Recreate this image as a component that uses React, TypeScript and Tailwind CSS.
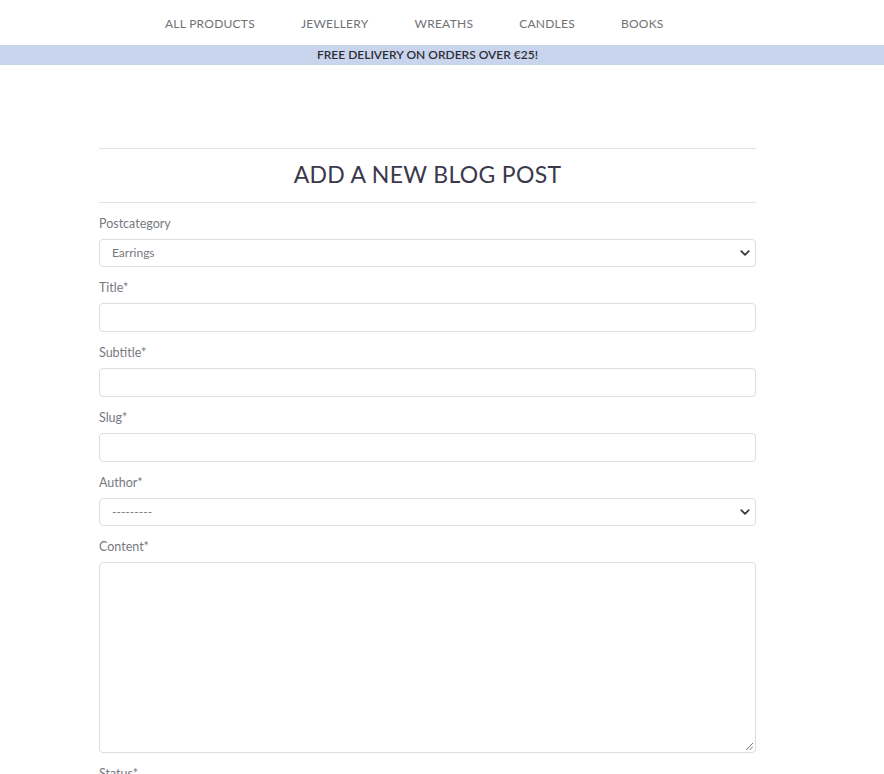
import React from "react";

const ff = { fontFamily: "Lato, 'Noto Sans', sans-serif" };

function Chevron() {
  return (
    <svg width="10" height="10" viewBox="0 0 16 16" className="absolute right-[5px] top-1/2 -translate-y-1/2">
      <path d="M2 5l6 6 6-6" fill="none" stroke="#343a40" strokeWidth="2.8" strokeLinecap="round" strokeLinejoin="round" />
    </svg>
  );
}

function Field({ label, children }: { label: string; children: React.ReactNode }) {
  return (
    <div className="flex flex-col">
      <label className="text-[12.5px] leading-[16px] text-[#76797f] mb-[7px]">{label}</label>
      {children}
    </div>
  );
}

function Select({ value }: { value: string }) {
  return (
    <div className="relative h-[28px] border border-[#dcdde2] rounded-[4px] bg-white flex items-center pl-[12px]">
      <span className="text-[12px] text-[#767a7f]">{value}</span>
      <Chevron />
    </div>
  );
}

function Input() {
  return <div className="h-[29px] border border-[#dcdde2] rounded-[4px] bg-white" />;
}

export default function App() {
  return (
    <div className="w-[884px] h-[774px] overflow-hidden bg-white" style={ff}>
      <nav className="h-[45px] flex items-center pl-[165px] pt-[3px] gap-[46px] text-[12px] text-[#6f7275] tracking-[0.25px]">
        <span>ALL PRODUCTS</span>
        <span>JEWELLERY</span>
        <span>WREATHS</span>
        <span>CANDLES</span>
        <span>BOOKS</span>
      </nav>
      <div className="h-[20px] bg-[#c8d5ec] flex items-center justify-center text-[12px] font-semibold text-[#2e2e35] pr-[29px]">
        FREE DELIVERY ON ORDERS OVER €25!
      </div>
      <main className="w-[657px] ml-[99px] pt-[83px]">
        <div className="border-t border-[#e3e3e6] border-b h-[55px] flex items-center justify-center pb-[3px]">
          <h1 className="text-[23px] text-[#3b384c] tracking-[0.3px]">ADD A NEW BLOG POST</h1>
        </div>
        <div className="flex flex-col gap-[13px] pt-[13px]">
          <Field label="Postcategory"><Select value="Earrings" /></Field>
          <Field label="Title*"><Input /></Field>
          <Field label="Subtitle*"><Input /></Field>
          <Field label="Slug*"><Input /></Field>
          <Field label="Author*"><Select value="---------" /></Field>
          <Field label="Content*">
            <div className="relative h-[191px] border border-[#dcdde2] rounded-[4px] bg-white">
              <svg width="8" height="8" viewBox="0 0 8 8" className="absolute right-[2px] bottom-[2px]">
                <path d="M1 8L8 1M4.5 8L8 4.5" stroke="#777" strokeWidth="1" />
              </svg>
            </div>
          </Field>
          <Field label="Status*"><Input /></Field>
        </div>
      </main>
    </div>
  );
}
